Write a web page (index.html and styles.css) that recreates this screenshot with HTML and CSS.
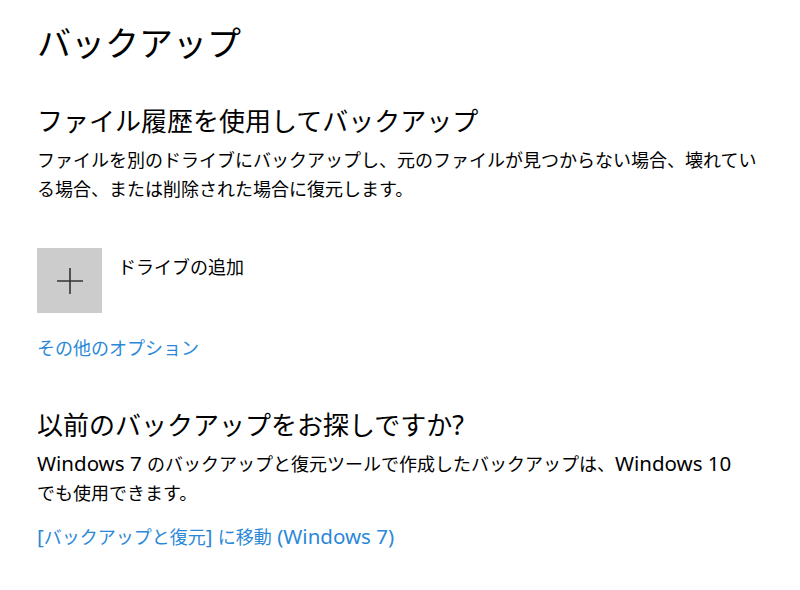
FILE: index.html
```html
<!DOCTYPE html>
<html lang="ja">
<head>
<meta charset="utf-8">
<title>バックアップ</title>
<link rel="stylesheet" href="styles.css">
</head>
<body>
<main class="page">
  <h1 class="title">バックアップ</h1>

  <section class="section">
    <h2 class="heading">ファイル履歴を使用してバックアップ</h2>
    <p class="desc">ファイルを別のドライブにバックアップし、元のファイルが見つからない場合、壊れてい<br>る場合、または削除された場合に復元します。</p>

    <div class="add-drive">
      <div class="add-box">
        <svg width="26" height="26" viewBox="0 0 26 26" aria-hidden="true">
          <path d="M13 0V26M0 13H26" stroke="#333" stroke-width="1.6" fill="none"/>
        </svg>
      </div>
      <span class="add-label">ドライブの追加</span>
    </div>

    <a class="link more" href="#">その他のオプション</a>
  </section>

  <section class="section second">
    <h2 class="heading">以前のバックアップをお探しですか<span class="latin-h">?</span></h2>
    <p class="desc"><span class="latin">Windows 7 </span>のバックアップと復元ツールで作成したバックアップは、<span class="latin">Windows 10</span><br>でも使用できます。</p>
    <a class="link goto" href="#"><span class="latin">[</span>バックアップと復元<span class="latin">] </span>に移動<span class="latin"> (Windows 7)</span></a>
  </section>
</main>
</body>
</html>
```

FILE: styles.css
```css
html, body {
  margin: 0;
  padding: 0;
  background: #ffffff;
}

body {
  font-family: "Noto Sans CJK JP", "Noto Sans", sans-serif;
  color: #000000;
}

.page {
  padding: 20px 0 0 37px;
  display: flex;
  flex-direction: column;
}

.title {
  margin: 0;
  font-size: 34px;
  line-height: 44px;
  font-weight: 400;
}

.section {
  display: flex;
  flex-direction: column;
  align-items: flex-start;
  margin-top: 39px;
}

.section.second {
  margin-top: 45.5px;
}

.heading {
  margin: 0;
  font-size: 26px;
  line-height: 34px;
  font-weight: 400;
}

.desc {
  margin: 7.5px 0 0;
  font-size: 18px;
  line-height: 29px;
}

.latin {
  font-family: "Noto Sans", sans-serif;
  font-size: 20.5px;
  line-height: 1;
}

.latin-h {
  font-family: "Noto Sans", sans-serif;
  font-size: 27px;
  line-height: 1;
}

.add-drive {
  display: flex;
  align-items: flex-start;
  gap: 16px;
  margin-top: 45.5px;
}

.add-box {
  width: 65px;
  height: 65px;
  background: #cccccc;
  display: flex;
  align-items: center;
  justify-content: center;
}

.add-label {
  margin-top: 3.5px;
  font-size: 18px;
  line-height: 29px;
}

.link {
  color: #2b88d8;
  text-decoration: none;
  font-size: 18px;
  line-height: 29px;
}

.more {
  margin-top: 19.5px;
}

.goto {
  margin-top: 15px;
}
```
